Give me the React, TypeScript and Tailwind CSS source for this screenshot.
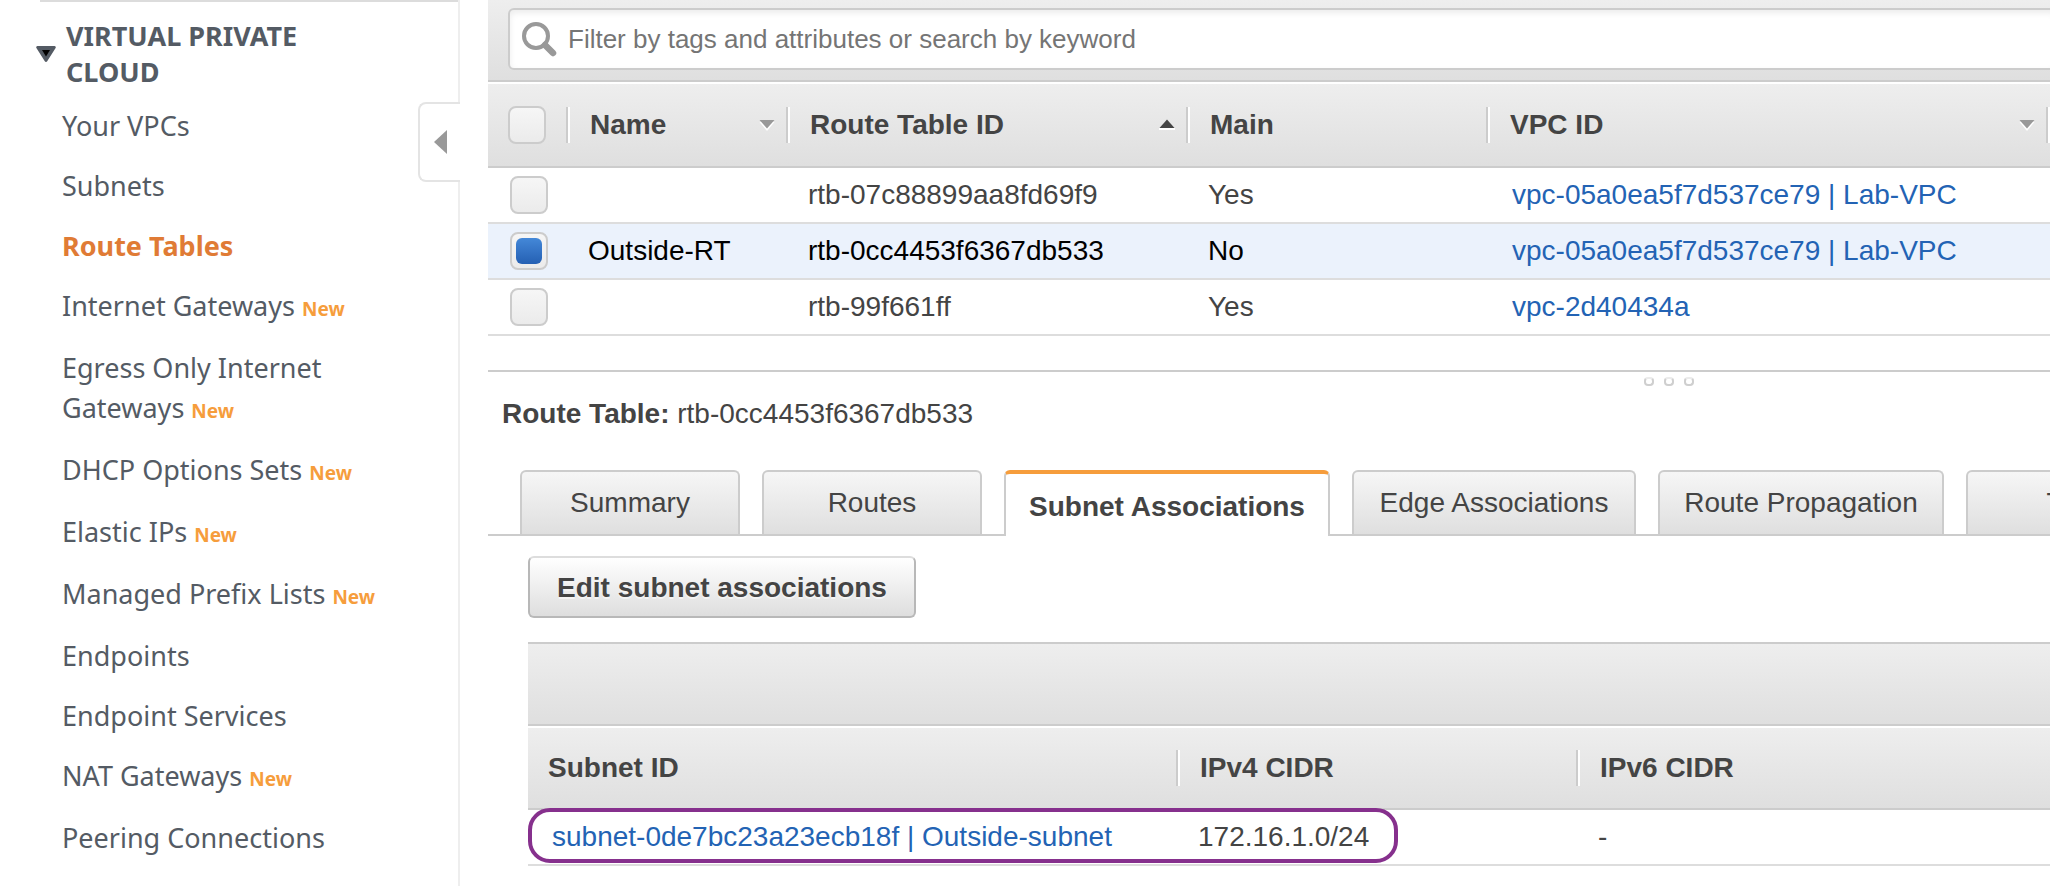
import { useState } from "react";

type NavItem = { label: string; isNew?: boolean; active?: boolean };

const NAV: NavItem[] = [
  { label: "Your VPCs" },
  { label: "Subnets" },
  { label: "Route Tables", active: true },
  { label: "Internet Gateways", isNew: true },
  { label: "Egress Only Internet Gateways", isNew: true },
  { label: "DHCP Options Sets", isNew: true },
  { label: "Elastic IPs", isNew: true },
  { label: "Managed Prefix Lists", isNew: true },
  { label: "Endpoints" },
  { label: "Endpoint Services" },
  { label: "NAT Gateways", isNew: true },
  { label: "Peering Connections" },
];

const ROUTE_TABLES = [
  { name: "", id: "rtb-07c88899aa8fd69f9", main: "Yes", vpc: "vpc-05a0ea5f7d537ce79 | Lab-VPC" },
  { name: "Outside-RT", id: "rtb-0cc4453f6367db533", main: "No", vpc: "vpc-05a0ea5f7d537ce79 | Lab-VPC" },
  { name: "", id: "rtb-99f661ff", main: "Yes", vpc: "vpc-2d40434a" },
];

const TABS = [
  { label: "Summary", width: "w-[220px]" },
  { label: "Routes", width: "w-[220px]" },
  { label: "Subnet Associations", width: "w-[326px]" },
  { label: "Edge Associations", width: "w-[284px]" },
  { label: "Route Propagation", width: "w-[286px]" },
  { label: "Tags", width: "w-[220px]" },
];

const CHECKBOX =
  "grid size-[38px] shrink-0 cursor-pointer appearance-none place-items-center rounded-lg border-2 border-[#cccccc] bg-linear-to-b from-[#f6f6f6] to-[#ebebeb] before:size-[26px] before:rounded-md before:content-[''] checked:before:bg-linear-to-b checked:before:from-[#4488d8] checked:before:to-[#2560b3]";

function SortArrow({ up }: { up?: boolean }) {
  return up ? (
    <svg width="16" height="12" viewBox="0 0 16 12" aria-hidden="true">
      <path d="M0 9h16v2H0z" fill="#fff" />
      <path d="M8 0.500 15.500 9H.5z" fill="#444" />
    </svg>
  ) : (
    <svg width="16" height="12" viewBox="0 0 16 12" aria-hidden="true">
      <path d="M8 12 15.500 3H.5z" fill="#fff" />
      <path d="M8 9.500 15.500 1H.5z" fill="#999" />
    </svg>
  );
}

function HeadCell({ label, sort, last }: { label: string; sort?: "up" | "down"; last?: boolean }) {
  return (
    <div className="flex items-center pl-5">
      <span className="flex-1 text-left">{label}</span>
      {sort && (
        <span className="mr-[11px]">
          <SortArrow up={sort === "up"} />
        </span>
      )}
      {!last && <Divider />}
    </div>
  );
}

function Divider() {
  return <span className="h-9 w-1 border-r-2 border-l-2 border-r-white border-l-[#cccccc]" />;
}

function Sidebar() {
  return (
    <nav
      aria-label="VPC navigation"
      className="relative w-[460px] shrink-0 border-r-2 border-[#eeeeee] font-['Noto_Sans',sans-serif] text-[27px] text-[#545b64]"
    >
      <div className="ml-10 h-[2px] bg-[#dcdcdc]" />
      <button
        type="button"
        aria-expanded="true"
        className="mt-4 flex items-center pl-9 text-left leading-9 font-bold"
      >
        <svg width="20" height="16" viewBox="0 0 20 16" className="mr-[10px] shrink-0" aria-hidden="true">
          <path d="M1.5 0h17a1.3 1.3 0 0 1 1.100 2l-8.400 13.200a1.400 1.400 0 0 1-2.400 0L.4 2A1.300 1.300 0 0 1 1.500 0z" fill="#545b64" />
          <path d="M6 4h8l-4 6.500z" fill="#000" />
        </svg>
        <span className="w-64">VIRTUAL PRIVATE CLOUD</span>
      </button>
      <ul className="mt-4 pl-[62px]">
        {NAV.map((item) => (
          <li key={item.label} className={item.isNew ? "w-[330px] pb-[22px] leading-10" : "pb-5 leading-10"}>
            <a
              href="#"
              aria-current={item.active ? "page" : undefined}
              className={item.active ? "font-bold text-[#e07b35]" : undefined}
            >
              {item.label}
            </a>
            {item.isNew && (
              <>
                {" "}
                <span className="text-[19px] leading-5 font-bold text-[#f69d3c]">New</span>
              </>
            )}
          </li>
        ))}
      </ul>
      <button
        type="button"
        aria-label="Collapse navigation"
        className="absolute top-[102px] -right-[2px] flex h-20 w-[42px] items-center rounded-l-lg border-2 border-r-0 border-[#e4e4e4] bg-white pl-[14px]"
      >
        <svg width="13" height="24" viewBox="0 0 13 24" aria-hidden="true">
          <path d="M13 0v24L0 12z" fill="#999" />
        </svg>
      </button>
    </nav>
  );
}

function FilterBar() {
  return (
    <div className="h-[82px] border-b-2 border-[#cccccc] bg-linear-to-b from-[#eeeeee] to-[#dfdfdf] pt-2 pl-5">
      <label className="-mr-2 flex h-[62px] items-center rounded-md border-2 border-[#cccccc] bg-white pl-[11px] shadow-[inset_0_3px_6px_rgba(0,0,0,0.08)]">
        <svg width="36" height="36" viewBox="0 0 36 36" aria-hidden="true">
          <circle cx="15" cy="15" r="12" fill="none" stroke="#999" strokeWidth="4" />
          <path d="m24 24 8 8" stroke="#999" strokeWidth="6.500" strokeLinecap="round" />
        </svg>
        <input
          type="text"
          aria-label="Filter route tables"
          placeholder="Filter by tags and attributes or search by keyword"
          className="ml-[11px] h-full flex-1 bg-transparent text-[26px] outline-none placeholder:text-[#757575]"
        />
      </label>
    </div>
  );
}

const HEAD = "border-t-2 border-b-2 border-t-white border-b-[#cccccc] bg-linear-to-b from-[#eeeeee] to-[#dfdfdf] p-0 font-bold";

function RouteTableList({ selected, onSelect }: { selected: number; onSelect: (index: number) => void }) {
  return (
    <table className="w-full table-fixed border-separate border-spacing-0">
      <colgroup>
        <col className="w-[82px]" />
        <col className="w-[220px]" />
        <col className="w-[400px]" />
        <col className="w-[300px]" />
        <col />
      </colgroup>
      <thead>
        <tr className="h-[86px]">
          <th className={HEAD}>
            <div className="flex items-center justify-between pl-5">
              <input type="checkbox" aria-label="Select all route tables" className={CHECKBOX} />
              <Divider />
            </div>
          </th>
          <th className={HEAD}><HeadCell label="Name" sort="down" /></th>
          <th className={HEAD}><HeadCell label="Route Table ID" sort="up" /></th>
          <th className={HEAD}><HeadCell label="Main" /></th>
          <th className={HEAD}><HeadCell label="VPC ID" sort="down" /></th>
        </tr>
      </thead>
      <tbody>
        {ROUTE_TABLES.map((row, index) => (
          <tr
            key={row.id}
            className={
              index === selected
                ? "h-14 bg-[#ebf2fc] text-black *:border-b-2 *:border-[#dddddd]"
                : "h-14 *:border-b-2 *:border-[#dddddd]"
            }
          >
            <td className="p-0 pl-[22px]">
              <input
                type="checkbox"
                aria-label={`Select ${row.id}`}
                checked={index === selected}
                onChange={() => onSelect(index)}
                className={CHECKBOX}
              />
            </td>
            <td className="p-0 pl-[18px]">{row.name}</td>
            <td className="p-0 pl-[18px]">{row.id}</td>
            <td className="p-0 pl-[18px]">{row.main}</td>
            <td className="p-0 pl-[22px]">
              <a href="#" className="text-[#2363b4]">{row.vpc}</a>
            </td>
          </tr>
        ))}
      </tbody>
    </table>
  );
}

function Splitter() {
  return (
    <div className="mt-[34px] flex h-[18px] justify-center gap-[10px] border-t-2 border-[#cccccc] pt-[5px] pl-[800px]">
      {[0, 1, 2].map((dot) => (
        <span key={dot} className="h-[9px] w-[10px] rounded-sm border-2 border-[#cfcfcf] border-t-[#ebebeb] bg-white" />
      ))}
    </div>
  );
}

function Tabs() {
  const [current, setCurrent] = useState("Subnet Associations");
  return (
    <div role="tablist" className="mt-10 flex h-[66px] gap-[22px] border-b-2 border-[#cccccc] pl-8">
      {TABS.map((tab) => {
        const active = tab.label === current;
        return (
          <button
            key={tab.label}
            type="button"
            role="tab"
            aria-selected={active}
            onClick={() => setCurrent(tab.label)}
            className={`${tab.width} shrink-0 rounded-t-md border-x-2 border-[#cccccc] whitespace-nowrap ${
              active
                ? "h-[66px] border-t-4 border-t-[#f69d3c] bg-white pt-1 font-bold"
                : "h-16 border-t-2 bg-linear-to-b from-[#f6f6f6] to-[#dfdfdf]"
            }`}
          >
            {tab.label}
          </button>
        );
      })}
    </div>
  );
}

function SubnetAssociations() {
  return (
    <section className="pt-5 pl-10" aria-label="Subnet associations">
      <button
        type="button"
        className="h-[62px] w-[388px] rounded-md border-2 border-[#b8b8b8] border-t-[#dddddd] bg-linear-to-b from-white to-[#dedede] pt-[2px] font-bold whitespace-nowrap text-shadow-[0_2px_0_#f4f4f4]"
      >
        Edit subnet associations
      </button>
      <div className="mt-6 h-[84px] border-y-2 border-[#cccccc] bg-linear-to-b from-[#eeeeee] to-[#dfdfdf]" />
      <table className="w-full table-fixed border-separate border-spacing-0">
        <colgroup>
          <col className="w-[652px]" />
          <col className="w-[400px]" />
          <col />
        </colgroup>
        <thead>
          <tr className="h-[84px]">
            <th className={HEAD}><HeadCell label="Subnet ID" /></th>
            <th className={HEAD}><HeadCell label="IPv4 CIDR" /></th>
            <th className={HEAD}><HeadCell label="IPv6 CIDR" last /></th>
          </tr>
        </thead>
        <tbody>
          <tr className="h-14 *:border-b-2 *:border-[#dddddd]">
            <td className="relative p-0 pl-6">
              <span className="pointer-events-none absolute -top-[2px] left-0 h-[55px] w-[870px] rounded-[22px] border-4 border-[#86308d]" />
              <a href="#" className="text-[#2363b4]">subnet-0de7bc23a23ecb18f | Outside-subnet</a>
            </td>
            <td className="p-0 pl-[18px]">172.16.1.0/24</td>
            <td className="p-0 pl-[18px]">-</td>
          </tr>
        </tbody>
      </table>
    </section>
  );
}

export default function App() {
  const [selected, setSelected] = useState(1);
  return (
    <div className="flex min-h-screen gap-7 overflow-hidden bg-white">
      <Sidebar />
      <main className="min-w-0 flex-1 overflow-hidden font-['Liberation_Sans',Arial,sans-serif] text-[28px] leading-8 text-[#444444]">
        <FilterBar />
        <RouteTableList selected={selected} onSelect={setSelected} />
        <Splitter />
        <h2 className="mt-[10px] pl-[14px] whitespace-nowrap">
          <strong>Route Table:</strong> {ROUTE_TABLES[selected].id}
        </h2>
        <Tabs />
        <SubnetAssociations />
      </main>
    </div>
  );
}
